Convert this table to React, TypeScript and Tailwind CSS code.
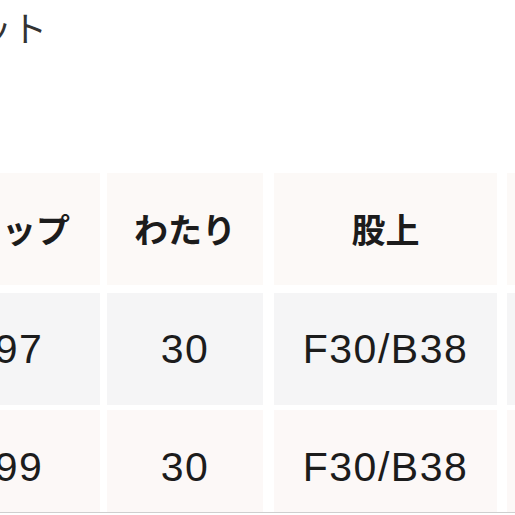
import React from "react";

const jp = { fontFamily: '"Noto Sans CJK JP", "Noto Sans", sans-serif' };
const num = { fontFamily: '"Liberation Sans", Arial, sans-serif' };

function Cell({
  w,
  ml,
  bg,
  children,
  kind,
  pt,
}: {
  w: string;
  ml: string;
  bg: string;
  children?: React.ReactNode;
  kind: "head" | "num";
  pt?: string;
}) {
  return (
    <div
      className={`${w} ${ml} ${bg} ${pt ?? ""} shrink-0 flex items-center justify-center whitespace-nowrap`}
    >
      {kind === "head" ? (
        <span
          style={jp}
          className="text-[34px] leading-[34px] font-bold text-[#1c1c1c]"
        >
          {children}
        </span>
      ) : (
        <span
          style={num}
          className="text-[41px] leading-[41px] tracking-[1.5px] text-[#1c1c1c]"
        >
          {children}
        </span>
      )}
    </div>
  );
}

export default function App() {
  const rows = [
    { bg: "bg-[#f5f5f6]", vals: ["97", "30", "F30/B38", ""], h: "h-[112px]", mt: "mt-[8px]", pt: "" },
    { bg: "bg-[#fcf8f7]", vals: ["99", "30", "F30/B38", ""], h: "h-[102px]", mt: "mt-[5px]", pt: "pt-[12px]" },
  ];
  return (
    <div className="w-[515px] h-[515px] overflow-hidden bg-white flex flex-col">
      <div className="h-[173px] shrink-0 pt-[9px]">
        <div
          style={jp}
          className="ml-[-23px] text-[35px] leading-[35px] text-[#333333] whitespace-nowrap"
        >
          ット
        </div>
      </div>
      <div className="flex h-[112px] shrink-0 ml-[-62px]">
        <Cell w="w-[162px]" ml="ml-0" bg="bg-[#fcf9f7]" kind="head">ヒップ</Cell>
        <Cell w="w-[156px]" ml="ml-[7px]" bg="bg-[#fcf9f7]" kind="head">わたり</Cell>
        <Cell w="w-[223px]" ml="ml-[11px]" bg="bg-[#fcf9f7]" kind="head">股上</Cell>
        <Cell w="w-[80px]" ml="ml-[10px]" bg="bg-[#fcf9f7]" kind="head"></Cell>
      </div>
      {rows.map((r, i) => (
        <div key={i} className={`flex ${r.h} ${r.mt} shrink-0 ml-[-62px]`}>
          <Cell w="w-[162px]" ml="ml-0" bg={r.bg} kind="num" pt={r.pt}>{r.vals[0]}</Cell>
          <Cell w="w-[156px]" ml="ml-[7px]" bg={r.bg} kind="num" pt={r.pt}>{r.vals[1]}</Cell>
          <Cell w="w-[223px]" ml="ml-[11px]" bg={r.bg} kind="num" pt={r.pt}>{r.vals[2]}</Cell>
          <Cell w="w-[80px]" ml="ml-[10px]" bg={r.bg} kind="num" pt={r.pt}>{r.vals[3]}</Cell>
        </div>
      ))}
      <div className="h-[1px] shrink-0 bg-[#cfcfcf]" />
    </div>
  );
}
